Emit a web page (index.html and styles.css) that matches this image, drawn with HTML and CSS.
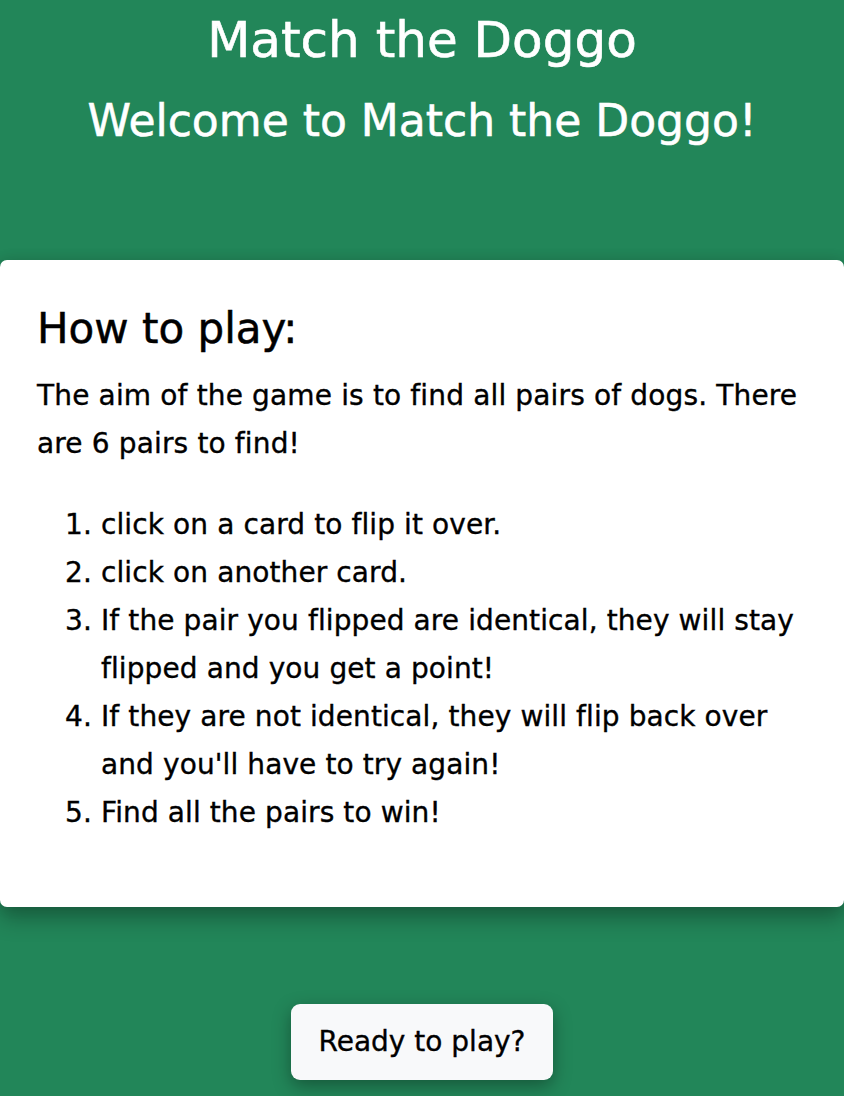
FILE: index.html
```html
<!DOCTYPE html>
<html lang="en">
<head>
<meta charset="utf-8">
<title>Match the Doggo</title>
<link rel="stylesheet" href="styles.css">
</head>
<body>
  <header class="header">
    <h1 class="title">Match the Doggo</h1>
    <h2 class="subtitle">Welcome to Match the Doggo!</h2>
  </header>
  <main class="card">
    <h3 class="card-title">How to play:</h3>
    <p class="intro">The aim of the game is to find all pairs of dogs. There are 6 pairs to find!</p>
    <ol class="steps">
      <li>click on a card to flip it over.</li>
      <li>click on another card.</li>
      <li>If the pair you flipped are identical, they will stay flipped and you get a point!</li>
      <li>If they are not identical, they will flip back over and you'll have to try again!</li>
      <li>Find all the pairs to win!</li>
    </ol>
  </main>
  <div class="actions">
    <button class="btn-play" type="button">Ready to play?</button>
  </div>
</body>
</html>
```
FILE: styles.css
```css
html, body {
  margin: 0;
  padding: 0;
}
body {
  background: #228659;
  font-family: "DejaVu Sans", "Liberation Sans", sans-serif;
  color: #000;
  min-height: 1096px;
  -webkit-text-stroke: 0.35px currentColor;
}
.header {
  display: flex;
  flex-direction: column;
  align-items: center;
  padding-top: 10px;
  height: 250px;
  color: #fff;
  text-align: center;
}
.title {
  margin: 0;
  font-size: 50px;
  font-weight: normal;
  line-height: 60px;
  -webkit-text-stroke: 0.6px currentColor;
}
.subtitle {
  margin: 24px 0 0;
  font-size: 44px;
  font-weight: normal;
  line-height: 53px;
  -webkit-text-stroke: 0.55px currentColor;
}
.card {
  display: block;
  background: #fff;
  border-radius: 7px;
  padding: 44px 37px 70px;
  box-shadow: 0 12px 22px rgba(0, 0, 0, 0.28), 0 0 14px rgba(0, 0, 0, 0.12);
}
.card-title {
  margin: 0 0 18px;
  font-size: 42px;
  font-weight: normal;
  line-height: 50px;
  -webkit-text-stroke: 0.5px currentColor;
}
.intro {
  margin: 0 0 33px;
  font-size: 28px;
  line-height: 48px;
  letter-spacing: 0.15px;
}
.steps {
  margin: 0;
  padding-left: 64px;
  font-size: 28px;
  line-height: 48px;
  letter-spacing: 0.1px;
}
.actions {
  display: flex;
  justify-content: center;
  padding-top: 97px;
}
.btn-play {
  font-family: inherit;
  font-size: 28px;
  line-height: 42px;
  color: #000;
  background: #f8f9fa;
  border: none;
  border-radius: 9px;
  padding: 17px 28px;
  box-shadow: 0 6px 18px rgba(0, 0, 0, 0.35);
  cursor: pointer;
  -webkit-text-stroke: 0.35px currentColor;
}
```
